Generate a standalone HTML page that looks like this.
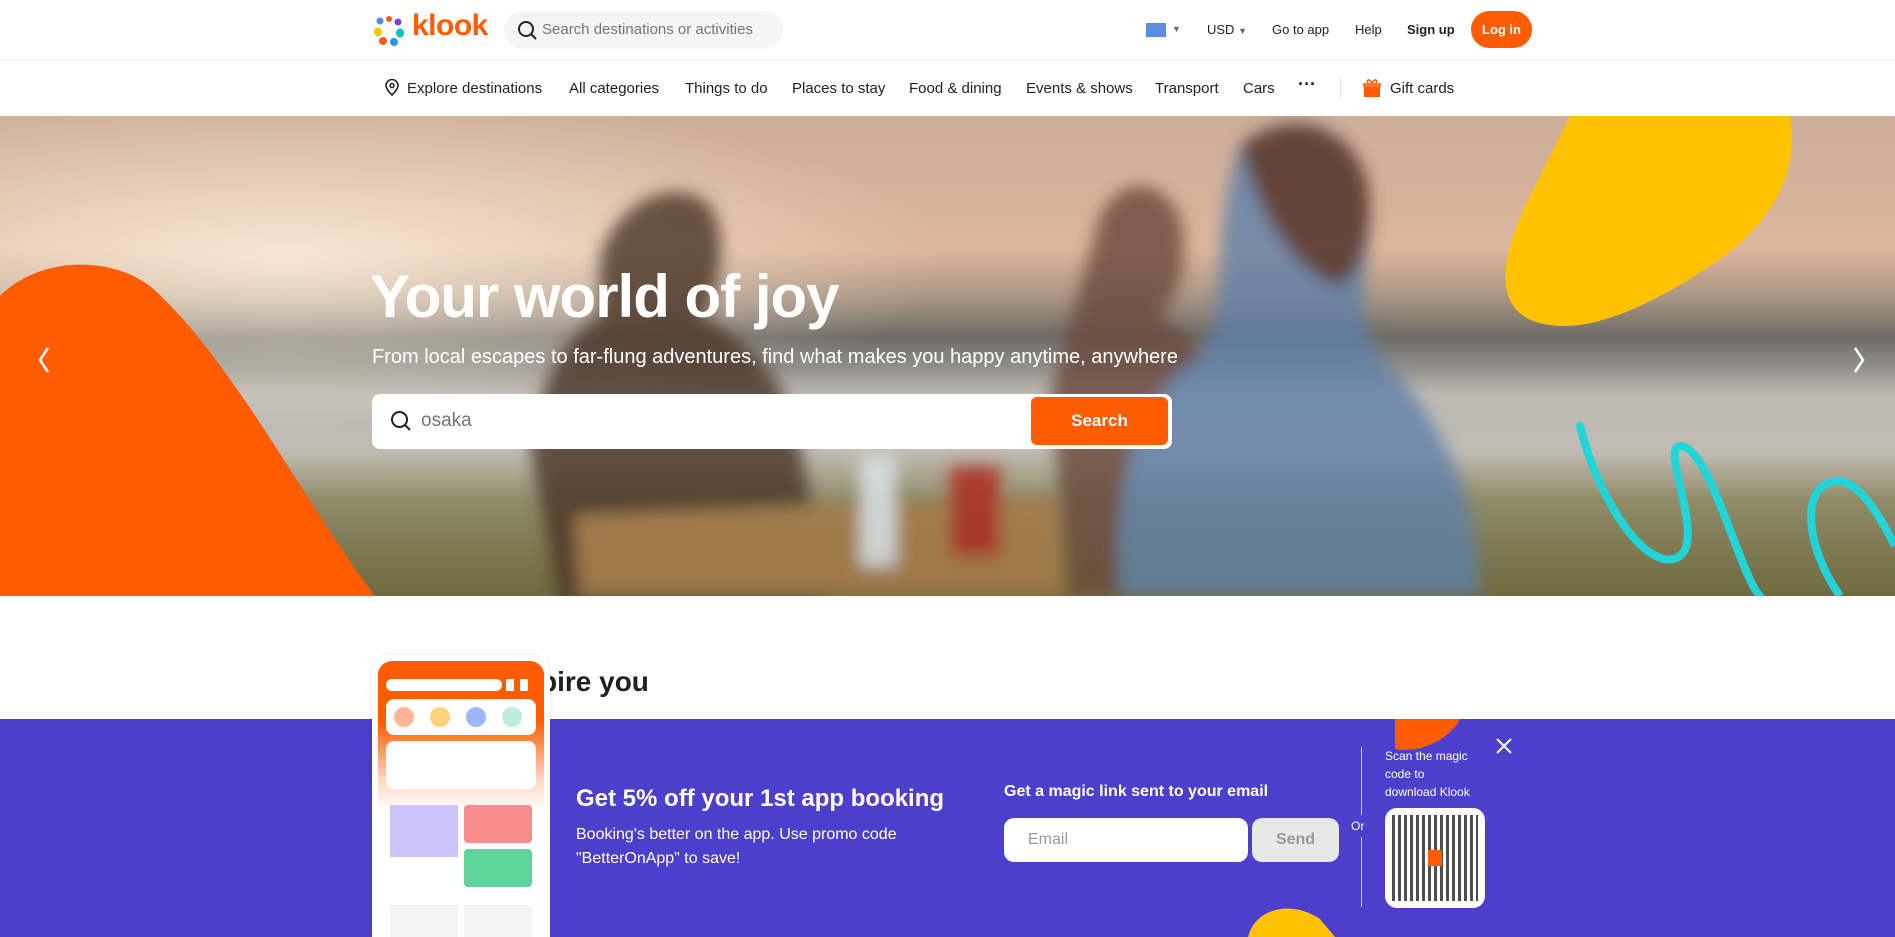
<!DOCTYPE html>
<html><head><meta charset="utf-8"><style>
*{margin:0;padding:0;box-sizing:border-box}
body{width:1895px;height:937px;overflow:hidden;font-family:"Liberation Sans",sans-serif;background:#fff;position:relative;color:#212121}
.abs{position:absolute}
.hdr{top:0;left:0;width:1895px;height:60px;border-bottom:1px solid #eee}
.nav{top:60px;left:0;width:1895px;height:56px}
.nav span{position:absolute;top:20px;font-size:15px;color:#212121}
.rt{position:absolute;top:22px;font-size:13px;color:#212121}
</style></head><body>
<div class="abs hdr">
 <svg class="abs" style="left:372px;top:14px" width="34" height="34" viewBox="0 0 34 34">
  <circle cx="8" cy="7" r="3.5" fill="#4a90e2"/><circle cx="17" cy="5" r="3" fill="#ff5722"/><circle cx="26" cy="8" r="3.5" fill="#7b3fe4"/>
  <ellipse cx="6" cy="18" rx="4" ry="4.5" fill="#ffc107"/><ellipse cx="28" cy="19" rx="4" ry="4.5" fill="#00c3b4"/>
  <ellipse cx="11" cy="27" rx="4" ry="4" fill="#ff5722"/><ellipse cx="22" cy="28" rx="4" ry="4" fill="#2196f3"/></svg>
 <div class="abs" style="left:412px;top:9px;font-size:30px;font-weight:bold;color:#ff5b00;letter-spacing:-0.5px">klook</div>
 <div class="abs" style="left:504px;top:11px;width:279px;height:38px;border-radius:19px;background:#f5f5f5"></div>
 <svg class="abs" style="left:516px;top:19px" width="22" height="22" viewBox="0 0 22 22"><circle cx="10" cy="10" r="7" fill="none" stroke="#212121" stroke-width="2"/><path d="M15 15l5 5" stroke="#212121" stroke-width="2"/></svg>
 <div class="abs" style="left:542px;top:21px;font-size:15px;color:#757575">Search destinations or activities</div>
 <div class="abs" style="left:1146px;top:23px;width:20px;height:14px;background:#5b8de0"></div>
 <div class="rt" style="left:1172px;font-size:9px;top:24px;color:#666">▼</div>
 <div class="rt" style="left:1207px">USD <span style="font-size:9px;color:#666">▼</span></div>
 <div class="rt" style="left:1272px">Go to app</div>
 <div class="rt" style="left:1355px">Help</div>
 <div class="rt" style="left:1407px;font-weight:bold">Sign up</div>
 <div class="abs" style="left:1471px;top:11px;width:61px;height:37px;border-radius:19px;background:#ff5b00;color:#fff;font-size:13px;font-weight:bold;text-align:center;line-height:37px">Log in</div>
</div>
<div class="abs nav">
 <svg class="abs" style="left:384px;top:19px" width="16" height="18" viewBox="0 0 16 18"><path d="M8 16s6-5.5 6-9.5A6 6 0 0 0 2 6.5C2 10.5 8 16 8 16z" fill="none" stroke="#212121" stroke-width="1.6"/><circle cx="8" cy="6.5" r="2" fill="none" stroke="#212121" stroke-width="1.5"/></svg>
 <span style="left:407px">Explore destinations</span>
 <span style="left:569px">All categories</span>
 <span style="left:685px">Things to do</span>
 <span style="left:792px">Places to stay</span>
 <span style="left:909px">Food &amp; dining</span>
 <span style="left:1026px">Events &amp; shows</span>
 <span style="left:1155px">Transport</span>
 <span style="left:1243px">Cars</span>
 <span style="left:1298px;font-weight:bold;top:14px;font-size:18px">···</span>
 <div class="abs" style="left:1340px;top:18px;width:1px;height:20px;background:#ddd"></div>
 <svg class="abs" style="left:1362px;top:18px" width="20" height="20" viewBox="0 0 20 20"><rect x="2" y="7" width="16" height="12" fill="#ff5b00"/><rect x="1" y="5" width="18" height="4" fill="#ff7a2e"/><path d="M10 5C7 0 4 2 6 5M10 5c3-5 6-3 4 0" stroke="#ff5b00" stroke-width="1.6" fill="none"/></svg>
 <span style="left:1390px">Gift cards</span>
</div>
<div class="abs" style="left:0;top:116px;width:1895px;height:480px;overflow:hidden;background:linear-gradient(180deg,#cdae9a 0%,#dcb59c 28%,#a89482 38%,#6e6c68 46%,#8f8d88 52%,#bdbab3 58%,#c0bcb4 70%,#8f8b68 80%,#6f6a3e 100%)">
 <svg class="abs" style="left:0;top:0" width="1895" height="480" viewBox="0 0 1895 480">
  <defs><radialGradient id="sun" cx="0.15" cy="0.3" r="0.35"><stop offset="0" stop-color="#fff4e0" stop-opacity="0.8"/><stop offset="1" stop-color="#fff4e0" stop-opacity="0"/></radialGradient>
  <filter id="bl"><feGaussianBlur stdDeviation="8"/></filter></defs>
  <rect width="1895" height="480" fill="url(#sun)"/>
  <g filter="url(#bl)" opacity="0.8">
  <path d="M600 140c20-60 80-80 110-50 20 30 10 90-10 110 40 20 90 60 100 130l30 160H560l-30-160c10-80 50-120 70-130z" fill="#4a3528"/>
  <path d="M1100 100c20-40 60-40 80 0 10 40 0 80-20 100l40 30-10 250h-120l-20-200z" fill="#6a4a3a"/>
  <path d="M1240 30c60-50 130-10 130 60 0 60-20 110 10 150 50 50 100 130 100 240H1120c-10-120 20-200 80-240 30-40 10-140 40-210z" fill="#5f80a8"/>
  <path d="M1240 30c60-50 130-10 130 60 0 40-10 70-30 80-40-10-80-60-100-140z" fill="#4a2c20"/>
  <path d="M575 400l480-20 10 100H580z" fill="#a87a48"/>
  <rect x="860" y="340" width="36" height="110" fill="#dfe8ee"/>
  <rect x="950" y="350" width="50" height="90" fill="#b0261c"/>
  </g>
  <path d="M0 180C40 140 110 140 150 170C230 240 300 380 375 480L0 480Z" fill="#ff5b00"/>
  <path d="M1570 0L1790 0C1800 60 1770 110 1710 150C1650 190 1600 210 1565 210C1490 210 1495 150 1530 80Z" fill="#ffc200"/>
  <path d="M1580 310C1600 390 1650 460 1680 440C1705 420 1660 330 1680 330C1710 330 1740 460 1760 480" fill="none" stroke="#22d3d8" stroke-width="8" stroke-linecap="round"/>
  <path d="M1840 480C1805 430 1800 370 1835 365C1860 362 1885 410 1895 430" fill="none" stroke="#22d3d8" stroke-width="8"/>
  <path d="M48 232l-8 12 8 12M1855 232l8 12-8 12" fill="none" stroke="#fff" stroke-width="2.5"/>
 </svg>
 <div class="abs" style="left:370px;top:146px;font-size:60px;font-weight:bold;color:#fff;letter-spacing:-1px">Your world of joy</div>
 <div class="abs" style="left:372px;top:230px;font-size:20px;color:#fff">From local escapes to far-flung adventures, find what makes you happy anytime, anywhere</div>
 <div class="abs" style="left:372px;top:278px;width:800px;height:55px;background:#fff;border-radius:8px"></div>
 <svg class="abs" style="left:389px;top:293px" width="24" height="24" viewBox="0 0 24 24"><circle cx="10.5" cy="10.5" r="7.5" fill="none" stroke="#212121" stroke-width="2"/><path d="M16 16l5 5" stroke="#212121" stroke-width="2"/></svg>
 <div class="abs" style="left:421px;top:294px;font-size:19px;color:#757575">osaka</div>
 <div class="abs" style="left:1031px;top:281px;width:137px;height:48px;border-radius:6px;background:#ff5b00;color:#fff;font-size:17px;font-weight:bold;text-align:center;line-height:48px">Search</div>
</div>
<div class="abs" style="left:540px;top:666px;font-size:28px;font-weight:bold;color:#212121">pire you</div>
<div class="abs" style="left:0;top:719px;width:1895px;height:218px;background:#4b3fcb;overflow:hidden">
 <svg class="abs" style="left:0;top:0" width="1895" height="218"><path d="M1395 0L1460 0C1450 20 1420 35 1395 30z" fill="#ff5b00"/><path d="M1248 218C1255 190 1290 180 1320 200L1335 218z" fill="#ffc200"/></svg>
 <div class="abs" style="left:576px;top:66px;font-size:24px;font-weight:bold;color:#fff">Get 5% off your 1st app booking</div>
 <div class="abs" style="left:576px;top:104px;font-size:16px;color:#fff;line-height:24px">Booking's better on the app. Use promo code<br>"BetterOnApp" to save!</div>
 <div class="abs" style="left:1004px;top:64px;font-size:16px;font-weight:bold;color:#fff">Get a magic link sent to your email</div>
 <div class="abs" style="left:1004px;top:99px;width:244px;height:44px;background:#fff;border-radius:10px;padding-left:24px;line-height:44px;font-size:16px;color:#999">Email</div>
 <div class="abs" style="left:1252px;top:99px;width:87px;height:44px;background:#e8e8e8;border-radius:10px;text-align:center;line-height:44px;font-size:16px;font-weight:bold;color:#999">Send</div>
 <div class="abs" style="left:1361px;top:28px;width:1px;height:160px;background:#ccc"></div>
 <div class="abs" style="left:1351px;top:96px;font-size:12px;color:#fff;background:#4b3fcb;padding:4px 0">Or</div>
 <div class="abs" style="left:1385px;top:28px;font-size:12px;color:#fff;line-height:18px">Scan the magic<br>code to<br>download Klook</div>
 <div class="abs" style="left:1385px;top:89px;width:100px;height:100px;background:#fff;border-radius:12px"></div>
 <div class="abs" style="left:1392px;top:96px;width:86px;height:86px;background:repeating-linear-gradient(90deg,#222 0 3px,transparent 3px 6px),repeating-linear-gradient(0deg,#fff 0 2px,transparent 2px 5px);opacity:.8"></div>
 <div class="abs" style="left:1428px;top:131px;width:14px;height:16px;background:#ff5b00"></div>
 <svg class="abs" style="left:1496px;top:19px" width="16" height="16"><path d="M1 1l14 14M15 1L1 15" stroke="#fff" stroke-width="2"/></svg>
</div>
<div class="abs" style="left:372px;top:655px;width:178px;height:282px;background:#fff;border-radius:18px 18px 0 0;box-shadow:0 0 4px rgba(0,0,0,.1)">
 <div class="abs" style="left:6px;top:6px;width:166px;height:150px;border-radius:14px 14px 0 0;background:linear-gradient(#ff5b00 40%,#ffd9c6 80%,#fff)"></div>
 <div class="abs" style="left:14px;top:24px;width:116px;height:12px;background:#fff;border-radius:6px"></div>
 <div class="abs" style="left:134px;top:24px;width:8px;height:12px;background:#fff"></div>
 <div class="abs" style="left:148px;top:24px;width:8px;height:12px;background:#fff"></div>
 <div class="abs" style="left:14px;top:44px;width:150px;height:36px;background:#fff;border-radius:8px"></div>
 <div class="abs" style="left:22px;top:52px;width:20px;height:20px;border-radius:50%;background:#ffb596"></div>
 <div class="abs" style="left:58px;top:52px;width:20px;height:20px;border-radius:50%;background:#ffd37a"></div>
 <div class="abs" style="left:94px;top:52px;width:20px;height:20px;border-radius:50%;background:#9cb8ff"></div>
 <div class="abs" style="left:130px;top:52px;width:20px;height:20px;border-radius:50%;background:#bdeedd"></div>
 <div class="abs" style="left:14px;top:86px;width:150px;height:48px;background:#fff;border-radius:8px"></div>
 <div class="abs" style="left:18px;top:150px;width:68px;height:52px;background:#c9c4fb"></div>
 <div class="abs" style="left:92px;top:150px;width:68px;height:38px;background:#f88c8c;border-radius:4px"></div>
 <div class="abs" style="left:92px;top:194px;width:68px;height:38px;background:#5fd49a;border-radius:4px"></div>
 <div class="abs" style="left:18px;top:250px;width:68px;height:32px;background:#f4f4f4"></div>
 <div class="abs" style="left:92px;top:250px;width:68px;height:32px;background:#f4f4f4"></div>
</div>
</body></html>
